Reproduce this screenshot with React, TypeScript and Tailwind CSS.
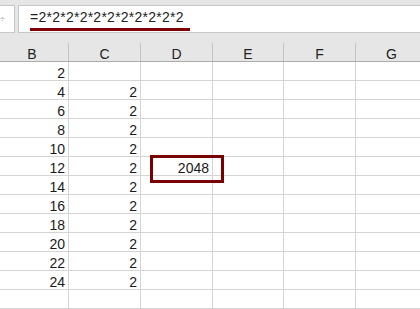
import React from "react";

const cols = ["B", "C", "D", "E", "F", "G"];
const widths = ["w-[73px] -ml-1", "w-[72px]", "w-[72px]", "w-[71px]", "w-[72px]", "w-[72px]"];

const rows: string[][] = [
  ["2", "", ""],
  ["4", "2", ""],
  ["6", "2", ""],
  ["8", "2", ""],
  ["10", "2", ""],
  ["12", "2", "2048"],
  ["14", "2", ""],
  ["16", "2", ""],
  ["18", "2", ""],
  ["20", "2", ""],
  ["22", "2", ""],
  ["24", "2", ""],
  ["", "", ""],
];

export default function App() {
  return (
    <div className="relative w-[420px] h-[309px] overflow-hidden bg-white text-[#1a1a1a] font-['Liberation_Sans',Arial,sans-serif]">
      {/* formula bar */}
      <div className="h-[33px] bg-[#e6e6e6] pt-[5px] flex gap-[3px]">
        <div className="w-[15px] h-[28px] bg-white border border-l-0 border-[#c6c6c6] flex items-center justify-end pr-[9px]">
          <span className="text-[9px] leading-none text-[#a0a0a0]">÷</span>
        </div>
        <div className="flex-1 h-[28px] bg-white border border-r-0 border-[#c6c6c6] pl-[11px] pt-[4px]">
          <div className="flex flex-col">
            <span className="text-[14px] leading-[14px] tracking-[0.25px] text-[#222]">=2*2*2*2*2*2*2*2*2*2*2</span>
            <div className="mt-[4px] w-[160px] h-[3px] bg-[#7f0000]" />
          </div>
        </div>
      </div>

      {/* column header */}
      <div className="h-[29px] bg-[#e6e6e6] border-b border-[#ababab] flex items-end">
        {cols.map((c, i) => (
          <div
            key={c}
            className={`${widths[i]} shrink-0 h-[18px] border-r border-[#c4c4c4] flex items-end justify-center text-[14px] leading-[14px] text-[#222]`}
          >
            {c}
          </div>
        ))}
      </div>

      {/* grid */}
      {rows.map((r, ri) => (
        <div key={ri} className="flex h-[19px] border-b border-[#d4d4d4]">
          {cols.map((c, ci) => (
            <div
              key={c}
              className={`${widths[ci]} shrink-0 h-[18px] border-r border-[#d4d4d4] flex items-end justify-end pr-[3px] text-[14px] leading-[14px]`}
            >
              {ci < 3 ? r[ci] : ""}
            </div>
          ))}
        </div>
      ))}

      {/* highlight box */}
      <div className="absolute left-[150px] top-[155px] w-[74px] h-[28px] border-[3px] border-[#7a0000]" />
    </div>
  );
}
